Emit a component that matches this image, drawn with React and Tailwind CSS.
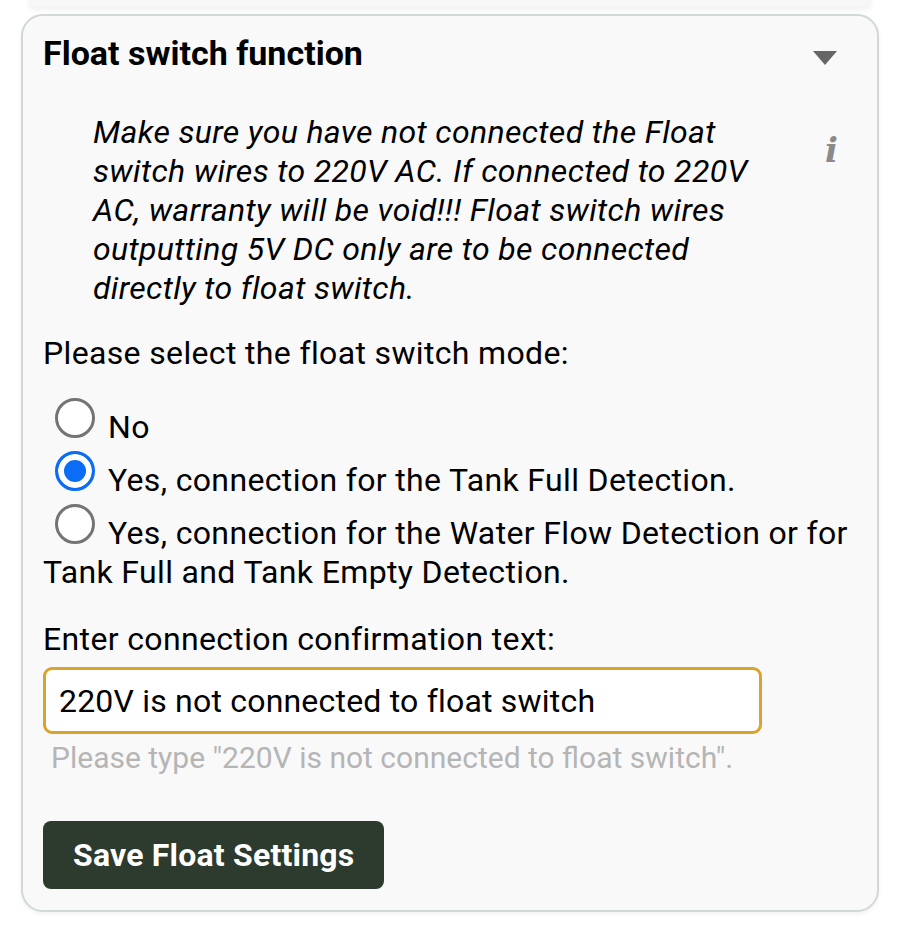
import { useState } from "react";

function Radio({ checked, onChange }) {
  return (
    <span
      onClick={onChange}
      className={
        "ml-[12px] mr-[13px] mt-[4px] inline-block h-[40px] w-[40px] rounded-full border-[3px] align-baseline " +
        (checked
          ? "border-[#0b6cf5] bg-[#0b6cf5] shadow-[inset_0_0_0_6px_#ffffff]"
          : "border-[#747474] bg-white")
      }
    />
  );
}

const options = [
  { id: "no", label: "No" },
  { id: "tank", label: "Yes, connection for the Tank Full Detection." },
  { id: "flow", label: "Yes, connection for the Water Flow Detection or for Tank Full and Tank Empty Detection." }
];

function App() {
  const [mode, setMode] = useState("tank");
  const [text, setText] = useState("220V is not connected to float switch");

  return (
    <div className="min-h-[926px] bg-white font-['Roboto',sans-serif] text-[32px] leading-[39px] tracking-[0.35px] text-black">
      <div className="mx-[28px] h-[6px] rounded-b-[20px] bg-[#f7f7f7] shadow-[0_3px_6px_rgba(0,0,0,0.08)]" />

      <section className="mx-[21px] mt-[8px] rounded-[22px] border-2 border-[#d0d9d7] bg-[#f9f9f9] px-[20px] pb-[21px] pt-[17px] shadow-[0_2px_4px_rgba(0,0,0,0.06)]">
        <div className="flex items-center justify-between">
          <h2 className="text-[34px] font-bold leading-[40px] tracking-normal">Float switch function</h2>
          <svg width="24" height="15" viewBox="0 0 24 15" className="mr-[20px] mt-[10px]">
            <polygon points="0,0 24,0 12,14" fill="#666666" />
          </svg>
        </div>

        <div className="mt-[40px] flex items-start">
          <p className="ml-[50px] w-[670px] italic">
            Make sure you have not connected the Float switch wires to 220V AC. If connected to 220V AC, warranty will be void!!! Float switch wires outputting 5V DC only are to be connected directly to float switch.
          </p>
          <span className="ml-[62px] mt-[18px] font-['DejaVu_Serif',serif] text-[34px] font-bold italic leading-[39px] text-[#8a8a8a]">
            i
          </span>
        </div>

        <p className="mt-[26px]">Please select the float switch mode:</p>

        <div className="mt-[21px]">
          {options.map((option) => (
            <div key={option.id}>
              <Radio checked={mode === option.id} onChange={() => setMode(option.id)} />
              {option.label}
            </div>
          ))}
        </div>

        <label className="mt-[28px] block">Enter connection confirmation text:</label>
        <input
          value={text}
          onChange={(event) => setText(event.target.value)}
          className="mt-[8px] block h-[67px] w-[719px] rounded-[9px] border-[3px] border-[#d9a32c] bg-white px-[13px] text-[32px] tracking-[0.2px] outline-none"
        />
        <p className="mt-[6px] pl-[8px] text-[30px] leading-[36px] tracking-normal text-[#b5b5b5]">
          Please type "220V is not connected to float switch".
        </p>

        <button
          type="button"
          className="mt-[45px] h-[68px] rounded-[8px] bg-[#2d3a2e] px-[30px] text-[32px] font-bold tracking-[0.2px] text-white"
        >
          Save Float Settings
        </button>
      </section>
    </div>
  );
}

export default App;
